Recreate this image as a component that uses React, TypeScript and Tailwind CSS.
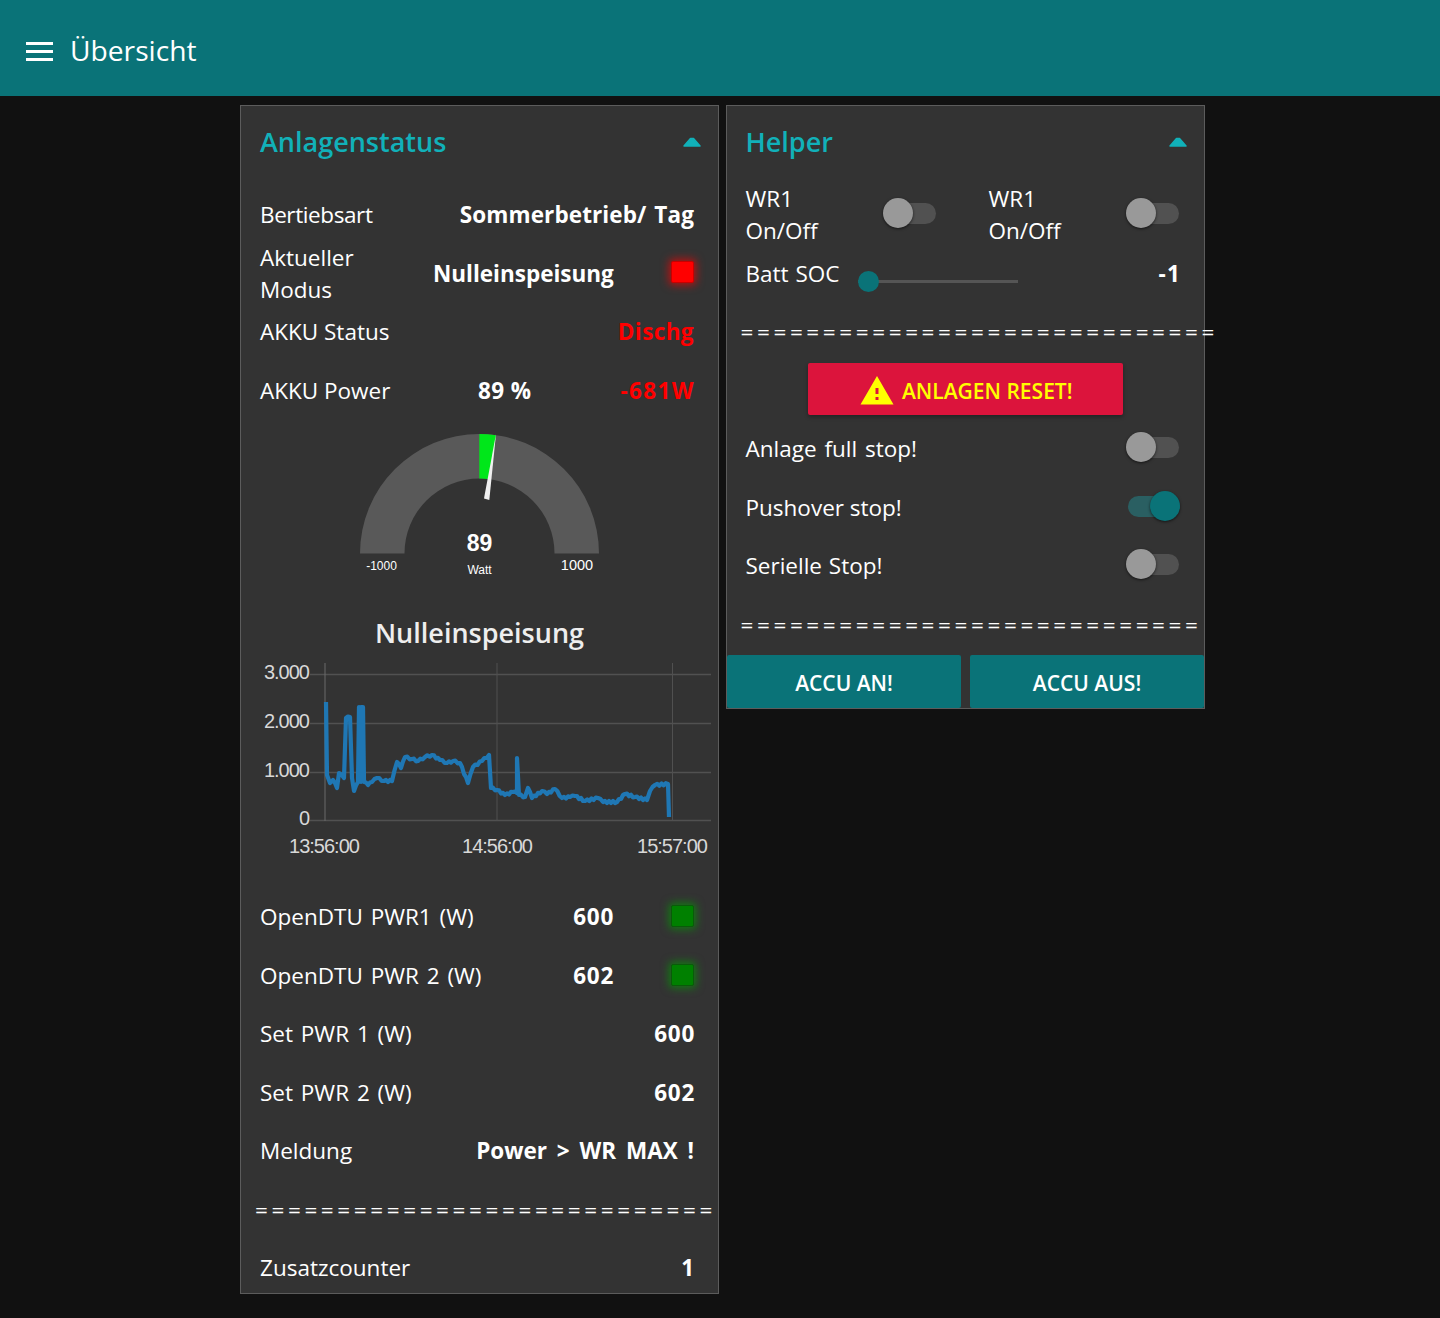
import React from 'react';

const font = { fontFamily: '"Open Sans", "Noto Sans", sans-serif' };

// rough trace of the power curve, in page coordinates shifted into the chart svg
const curve: [number, number][] = [
  [326, 702], [327, 775], [330, 783], [333, 780], [337, 788], [339, 773], [344, 778], [346, 718], [350, 717],
  [352, 778], [354, 791], [358, 782], [359, 707], [361, 782], [361, 707], [363, 707], [364, 782], [368, 785],
  [372, 782], [377, 778], [384, 781], [392, 781], [397, 762], [401, 768], [405, 757], [412, 759], [418, 761],
  [425, 757], [432, 755], [440, 760], [447, 763], [453, 761], [460, 763], [468, 783], [473, 767], [482, 761],
  [489, 755], [491, 788], [497, 790], [505, 795], [513, 792], [517, 793], [517, 758], [519, 795], [525, 797],
  [528, 788], [532, 798], [542, 791], [547, 794], [555, 789], [562, 798], [570, 797], [575, 796], [585, 801],
  [598, 798], [603, 802], [617, 802], [625, 794], [635, 797], [647, 800], [650, 791], [655, 785], [668, 784],
  [669, 817],
];

function buildLine() {
  let d = '';
  curve.forEach(([x, y], i) => {
    if (i === 0) {
      d += `M${x} ${y}`;
      return;
    }
    const [px, py] = curve[i - 1];
    const steps = Math.floor((x - px) / 2);
    for (let s = 1; s < steps; s++) {
      const t = s / steps;
      const wob = s % 2 === 0 ? 1 : -1;
      d += ` L${(px + (x - px) * t).toFixed(1)} ${(py + (y - py) * t + wob).toFixed(1)}`;
    }
    d += ` L${x} ${y}`;
  });
  return d;
}

function Row({ children, className = 'h-[58.5px]' }: { children: React.ReactNode; className?: string }) {
  return <div className={`flex items-center text-[22.5px] leading-[32px] text-white ${className}`}>{children}</div>;
}

function Led({ color }: { color: 'red' | 'green' }) {
  return (
    <div
      className={
        color === 'red'
          ? 'mt-[-4px] h-[22px] w-[23px] rounded-[2px] border border-[#c80000] bg-[#ff0000] shadow-[0_0_8px_2px_#ff0000aa]'
          : 'mt-[-2px] h-[22px] w-[23px] rounded-[2px] border border-[#0a5a0a] bg-[#008000] shadow-[0_0_8px_2px_#00a000aa]'
      }
    />
  );
}

function Toggle({ on = false }: { on?: boolean }) {
  return (
    <div className="relative h-[30px] w-[53px] shrink-0">
      <div className={`absolute top-[5px] left-[1px] h-[21px] w-[52px] rounded-full ${on ? 'bg-[#2a5f62]' : 'bg-[#515151]'}`} />
      <div
        className={`absolute top-0 h-[30px] w-[30px] rounded-full shadow-[0_1px_3px_#0009] ${
          on ? 'right-0 bg-[#0a7378]' : 'left-0 bg-[#999999]'
        }`}
      />
    </div>
  );
}

function Sep({ n }: { n: number }) {
  return (
    <div className="ml-[-5px] whitespace-nowrap text-[22.5px] tracking-[3.6px] text-white">{'='.repeat(n)}</div>
  );
}

function PanelHead({ title, caretClass }: { title: string; caretClass: string }) {
  return (
    <div className="flex h-[80px] items-center justify-between pb-[8px]">
      <span className="text-[27px] font-semibold text-[#11b1b9]">{title}</span>
      <svg width="18" height="10" viewBox="0 0 18 10" className={caretClass}>
        <path d="M1 9 L7.5 1.5 H10.5 L17 9 Z" fill="#11b1b9" stroke="#11b1b9" strokeWidth="1.5" strokeLinejoin="round" />
      </svg>
    </div>
  );
}

function Gauge() {
  return (
    <svg width="280" height="170" viewBox="340 420 280 170" className="mx-auto">
      <path d="M360 553.5 A119.5 119.5 0 0 1 599 553.5 H554.5 A75 75 0 0 0 404.5 553.5 Z" fill="#595959" />
      <path d="M479.3 434 A119.5 119.5 0 0 1 496 435.2 L489.7 479.2 A75 75 0 0 0 479.3 478.5 Z" fill="#00e71a" />
      <path d="M496 434 L489.3 500 L484 498.5 Z" fill="#f0f0f0" />
      <g fontFamily="Liberation Sans, Arial, sans-serif" fill="#fff" textAnchor="middle">
        <text x="479.5" y="551" fontSize="23" fontWeight="700">89</text>
        <text x="479.5" y="574" fontSize="12">Watt</text>
        <text x="381.5" y="570" fontSize="12">-1000</text>
        <text x="577" y="570" fontSize="14.5">1000</text>
      </g>
    </svg>
  );
}

function Chart() {
  const yLabels: [string, number][] = [['3.000', 679], ['2.000', 728], ['1.000', 777], ['0', 825]];
  const xLabels: [string, number][] = [['13:56:00', 324], ['14:56:00', 497], ['15:57:00', 672]];
  return (
    <svg width="478" height="228" viewBox="241 660 478 228" className="block">
      {[674, 723, 772, 820].map((y) => (
        <line key={y} x1="310" x2="711" y1={y + 0.5} y2={y + 0.5} stroke="#515151" strokeWidth="1.5" />
      ))}
      {[325, 497, 672.5].map((x) => (
        <line key={x} x1={x} x2={x} y1="663" y2="821" stroke={x === 325 ? '#6a6a6a' : '#505050'} strokeWidth="1" />
      ))}
      <path d={buildLine()} fill="none" stroke="#1f77b4" strokeWidth="4.2" strokeLinejoin="round" />
      <g fontFamily="Liberation Sans, Arial, sans-serif" fill="#d8d8d8" fontSize="20" letterSpacing="-1">
        {yLabels.map(([t, y]) => (
          <text key={t} x="309" y={y} textAnchor="end">{t}</text>
        ))}
        {xLabels.map(([t, x]) => (
          <text key={t} x={x} y="853" textAnchor="middle">{t}</text>
        ))}
      </g>
    </svg>
  );
}

function LeftPanel() {
  return (
    <div className="w-[479px] border border-[#5c5c5c] bg-[#333333] pr-[24px] pl-[19px]">
      <PanelHead title="Anlagenstatus" caretClass="mr-[-7px]" />
      <Row>
        <span className="flex-1 tracking-[-0.4px]">Bertiebsart</span>
        <b className="tracking-[0.1px] [word-spacing:2px]">Sommerbetrieb/ Tag</b>
      </Row>
      <Row>
        <span className="w-[150px]">Aktueller Modus</span>
        <b className="flex-1 pl-[23px]">Nulleinspeisung</b>
        <Led color="red" />
      </Row>
      <Row>
        <span className="flex-1">AKKU Status</span>
        <b className="tracking-[0.4px] text-[#ff0000]">Dischg</b>
      </Row>
      <Row>
        <span className="w-[218px]">AKKU Power</span>
        <b className="flex-1 tracking-[0.4px]">89 %</b>
        <b className="mr-[-1px] tracking-[1.4px] text-[#ff0000]">-681W</b>
      </Row>
      <div className="-mr-[24px] -ml-[19px]">
        <Gauge />
        <div className="flex h-[70px] items-center justify-center pt-[16px] text-[27px] font-semibold text-[#eeeeee]">Nulleinspeisung</div>
        <Chart />
      </div>
      <Row>
        <span className="flex-1 [word-spacing:2px]">OpenDTU PWR1 (W)</span>
        <b className="mr-[57px] tracking-[0.7px]">600</b>
        <Led color="green" />
      </Row>
      <Row>
        <span className="flex-1 [word-spacing:2px]">OpenDTU PWR 2 (W)</span>
        <b className="mr-[57px] tracking-[0.7px]">602</b>
        <Led color="green" />
      </Row>
      <Row>
        <span className="flex-1 [word-spacing:2px]">Set PWR 1 (W)</span>
        <b className="mr-[-1px] tracking-[0.7px]">600</b>
      </Row>
      <Row>
        <span className="flex-1 [word-spacing:2px]">Set PWR 2 (W)</span>
        <b className="mr-[-1px] tracking-[0.7px]">602</b>
      </Row>
      <Row>
        <span className="flex-1 [word-spacing:1px]">Meldung</span>
        <b className="[word-spacing:4px]">Power &gt; WR MAX !</b>
      </Row>
      <Row>
        <Sep n={28} />
      </Row>
      <Row className="h-[54px] pt-[4px]">
        <span className="flex-1">Zusatzcounter</span>
        <b>1</b>
      </Row>
    </div>
  );
}

function RightPanel() {
  return (
    <div className="w-[479px] self-start border border-[#5c5c5c] bg-[#333333]">
      <div className="pr-[25px] pl-[18.5px]">
        <PanelHead title="Helper" caretClass="mr-[-8px]" />
        <Row>
          <div className="flex w-[243px] items-center">
            <span className="w-[137px] pr-[30px]">WR1 On/Off</span>
            <div className="mt-[-4px]">
              <Toggle />
            </div>
          </div>
          <div className="flex flex-1 items-center">
            <span className="w-[137px] pr-[30px]">WR1 On/Off</span>
            <div className="mt-[-4px]">
              <Toggle />
            </div>
          </div>
        </Row>
        <Row>
          <span className="w-[112px] [word-spacing:1px]">Batt SOC</span>
          <div className="relative mt-[15px] h-[3px] w-[160px] bg-[#555555]">
            <div className="absolute top-[-9px] left-0 h-[21px] w-[21px] rounded-full bg-[#0a7378]" />
          </div>
          <b className="mr-[-2px] ml-auto tracking-[1.2px]">-1</b>
        </Row>
        <Row>
          <Sep n={29} />
        </Row>
        <Row className="h-[58.5px] justify-center">
          <div className="mt-[-3px] mr-[-7px] flex h-[52px] w-[315px] items-center justify-center gap-[7px] rounded-[2px] bg-[#dc143c] text-[21px] font-semibold text-[#ffff00] shadow-[0_2px_4px_#0005]">
            <svg width="36" height="36" viewBox="0 0 24 24" className="mt-[3px]">
              <path d="M1 21h22L12 2 1 21zm12-3h-2v-2h2v2zm0-4h-2v-4h2v4z" fill="#ffff00" fillRule="evenodd" />
            </svg>
            <span className="pt-[3px]">ANLAGEN RESET!</span>
          </div>
        </Row>
        <Row className="h-[58.5px] justify-between">
          <span className="[word-spacing:2px]">Anlage full stop!</span>
          <div className="mt-[-4px]">
            <Toggle />
          </div>
        </Row>
        <Row className="h-[58.5px] justify-between">
          <span>Pushover stop!</span>
          <div className="mt-[-4px] mr-[-1px]">
            <Toggle on />
          </div>
        </Row>
        <Row className="h-[58.5px] justify-between">
          <span className="[word-spacing:1px]">Serielle Stop!</span>
          <div className="mt-[-4px]">
            <Toggle />
          </div>
        </Row>
        <Row>
          <Sep n={28} />
        </Row>
      </div>
      <div className="mt-[1px] flex justify-between">
        <div className="flex h-[53px] w-[234px] items-center justify-center rounded-[2px] bg-[#0a7378] pt-[4px] text-[21px] font-semibold text-white">ACCU AN!</div>
        <div className="flex h-[53px] w-[234px] items-center justify-center rounded-[2px] bg-[#0a7378] pt-[4px] text-[21px] font-semibold text-white">ACCU AUS!</div>
      </div>
    </div>
  );
}

export default function App() {
  return (
    <div className="min-h-[1318px] overflow-hidden bg-[#111111]" style={font}>
      <header className="flex h-[96px] items-center bg-[#0a7378] pt-[4px] pl-[26px] text-white">
        <div className="flex w-[27px] flex-col gap-[5px] pt-[3px]">
          <div className="h-[3px] bg-white" />
          <div className="h-[3px] bg-white" />
          <div className="h-[3px] bg-white" />
        </div>
        <h1 className="ml-[17px] text-[28.2px]">Übersicht</h1>
      </header>
      <main className="flex gap-[7px] pt-[9px] pl-[240px]">
        <LeftPanel />
        <RightPanel />
      </main>
    </div>
  );
}
